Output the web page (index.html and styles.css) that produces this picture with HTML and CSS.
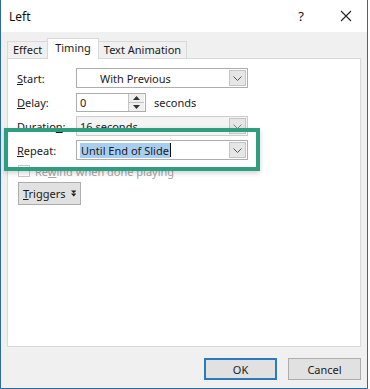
FILE: index.html
```html
<!DOCTYPE html>
<html lang="en">
<head>
    <meta charset="UTF-8">
    <meta name="viewport" content="width=device-width, initial-scale=1.0">
    <title>Left</title>
    <link rel="stylesheet" href="styles.css">
</head>
<body>
    <div class="window">
        <div class="titlebar">
            <span class="title">Left</span>
            <span class="help">?</span>
            <svg class="close" width="12" height="12" viewBox="0 0 12 12">
                <path d="M1 1 L11 11 M11 1 L1 11" stroke="#222" stroke-width="1.1" fill="none"/>
            </svg>
        </div>

        <div class="content">
            <div class="tabs">
                <div class="tab">Effect</div>
                <div class="tab active">Timing</div>
                <div class="tab">Text Animation</div>
            </div>

            <div class="panel">
                <div class="row">
                    <label class="lbl"><u>S</u>tart:</label>
                    <div class="combo">
                        <span class="value indent">With Previous</span>
                        <span class="arrow"><svg width="9" height="5" viewBox="0 0 9 5"><path d="M0.5 0.5 L4.5 4.5 L8.5 0.5" stroke="#555" fill="none"/></svg></span>
                    </div>
                </div>

                <div class="row">
                    <label class="lbl"><u>D</u>elay:</label>
                    <div class="spin">
                        <span class="value">0</span>
                        <span class="spinbtn">
                            <span class="up"><svg width="7" height="4" viewBox="0 0 7 4"><path d="M0 4 L3.5 0 L7 4 Z" fill="#333"/></svg></span>
                            <span class="down"><svg width="7" height="4" viewBox="0 0 7 4"><path d="M0 0 L3.5 4 L7 0 Z" fill="#333"/></svg></span>
                        </span>
                    </div>
                    <span class="unit">seconds</span>
                </div>

                <div class="row">
                    <label class="lbl">Duratio<u>n</u>:</label>
                    <div class="combo disabled">
                        <span class="value">16 seconds</span>
                        <span class="arrow"><svg width="9" height="5" viewBox="0 0 9 5"><path d="M0.5 0.5 L4.5 4.5 L8.5 0.5" stroke="#888" fill="none"/></svg></span>
                    </div>
                </div>

                <div class="row">
                    <label class="lbl"><u>R</u>epeat:</label>
                    <div class="combo">
                        <span class="value"><span class="selected">Until End of Slide</span><span class="caret"></span></span>
                        <span class="arrow"><svg width="9" height="5" viewBox="0 0 9 5"><path d="M0.5 0.5 L4.5 4.5 L8.5 0.5" stroke="#555" fill="none"/></svg></span>
                    </div>
                </div>

                <div class="check-row">
                    <span class="checkbox"></span>
                    <span class="check-label">Re<u>w</u>ind when done playing</span>
                </div>

                <button class="triggers"><span><u>T</u>riggers</span><svg width="8" height="9" viewBox="0 0 8 9"><path d="M0 0 L8 0 L4 4 Z M0 4.5 L8 4.5 L4 9 Z" fill="#222"/></svg></button>

                <div class="highlight"></div>
            </div>

            <div class="footer">
                <button class="btn default">OK</button>
                <button class="btn">Cancel</button>
            </div>
        </div>
    </div>
</body>
</html>
```

FILE: styles.css
```css
body {
    margin: 0;
    background: #ffffff;
    font-family: "Noto Sans", "Open Sans", sans-serif;
    font-size: 11px;
    color: #1a1a1a;
}

.window {
    width: 368px;
    height: 389px;
    box-sizing: border-box;
    border: 1px solid #2b6ca8;
    border-top: none;
    background: #f0f0f0;
    display: flex;
    flex-direction: column;
}

.titlebar {
    height: 32px;
    background: #ffffff;
    display: flex;
    align-items: center;
    padding: 0 15px 0 8px;
    font-size: 12px;
    color: #111;
}

.title {
    flex: 1;
}

.help {
    font-size: 13px;
    margin-right: 36px;
}

.content {
    flex: 1;
    display: flex;
    flex-direction: column;
    padding: 6px 6px 0 6px;
}

.tabs {
    display: flex;
    align-items: flex-end;
    height: 20px;
}

.tab {
    height: 16px;
    line-height: 15px;
    padding: 0 5px;
    border: 1px solid #d9d9d9;
    border-bottom: none;
    margin-right: -1px;
    background: #f0f0f0;
}

.tab.active {
    height: 20px;
    line-height: 17px;
    padding: 0 7px;
    background: #ffffff;
    position: relative;
    z-index: 1;
    margin-bottom: -1px;
}

.panel {
    position: relative;
    height: 289px;
    background: #ffffff;
    border: 1px solid #d9d9d9;
    padding: 9px 0 0 9px;
    box-sizing: border-box;
}

.row {
    display: flex;
    align-items: center;
    height: 20px;
    margin-bottom: 4px;
}

.lbl {
    width: 59px;
}

.combo {
    width: 172px;
    height: 20px;
    box-sizing: border-box;
    border: 1px solid #adadad;
    background: #ffffff;
    display: flex;
    align-items: center;
}

.combo.disabled {
    background: #f4f4f4;
    border-color: #cccccc;
}

.value {
    flex: 1;
    padding-left: 3px;
    display: flex;
    align-items: center;
}

.value.indent {
    padding-left: 23px;
}

.arrow {
    width: 17px;
    height: 16px;
    margin-right: 1px;
    box-sizing: border-box;
    border: 1px solid #c4c4c4;
    background: #e6e6e6;
    display: flex;
    align-items: center;
    justify-content: center;
}

.selected {
    background: #a9cdef;
    padding: 0 1px;
    line-height: 15px;
}

.caret {
    width: 1px;
    height: 14px;
    background: #111;
}

.spin {
    width: 70px;
    height: 19px;
    box-sizing: border-box;
    border: 1px solid #adadad;
    display: flex;
    align-items: center;
}

.spinbtn {
    width: 16px;
    height: 17px;
    margin-right: 1px;
    display: flex;
    flex-direction: column;
    border-left: 1px solid #c4c4c4;
    box-sizing: border-box;
}

.spinbtn span {
    flex: 1;
    display: flex;
    align-items: center;
    justify-content: center;
    background: #efefef;
}

.spinbtn .up {
    border-bottom: 1px solid #c4c4c4;
}

.unit {
    margin-left: 8px;
}

.check-row {
    display: flex;
    align-items: center;
    height: 14px;
    margin: 2px 0 4px 1px;
}

.checkbox {
    width: 12px;
    height: 12px;
    box-sizing: border-box;
    border: 1px solid #c8c8c8;
    margin-right: 5px;
}

.check-label {
    color: #a6a6a6;
}

.triggers {
    margin-left: 1px;
    width: 63px;
    height: 23px;
    border: 1px solid #adadad;
    background: #e1e1e1;
    font-family: inherit;
    font-size: 11px;
    color: #1a1a1a;
    display: flex;
    align-items: center;
    gap: 5px;
    padding: 0 4px;
}

.highlight {
    position: absolute;
    left: -4px;
    top: 69px;
    width: 256px;
    height: 43px;
    box-sizing: border-box;
    border: 4px solid #2f9e80;
    box-shadow: 0 2px 5px rgba(0, 0, 0, 0.18);
}

.footer {
    display: flex;
    justify-content: flex-end;
    gap: 11px;
    padding: 11px 0 0 0;
}

.btn {
    width: 73px;
    height: 22px;
    border: 1px solid #adadad;
    background: #e1e1e1;
    font-family: inherit;
    font-size: 11px;
    color: #1a1a1a;
}

.btn.default {
    border: 2px solid #2a7ac0;
}
```
